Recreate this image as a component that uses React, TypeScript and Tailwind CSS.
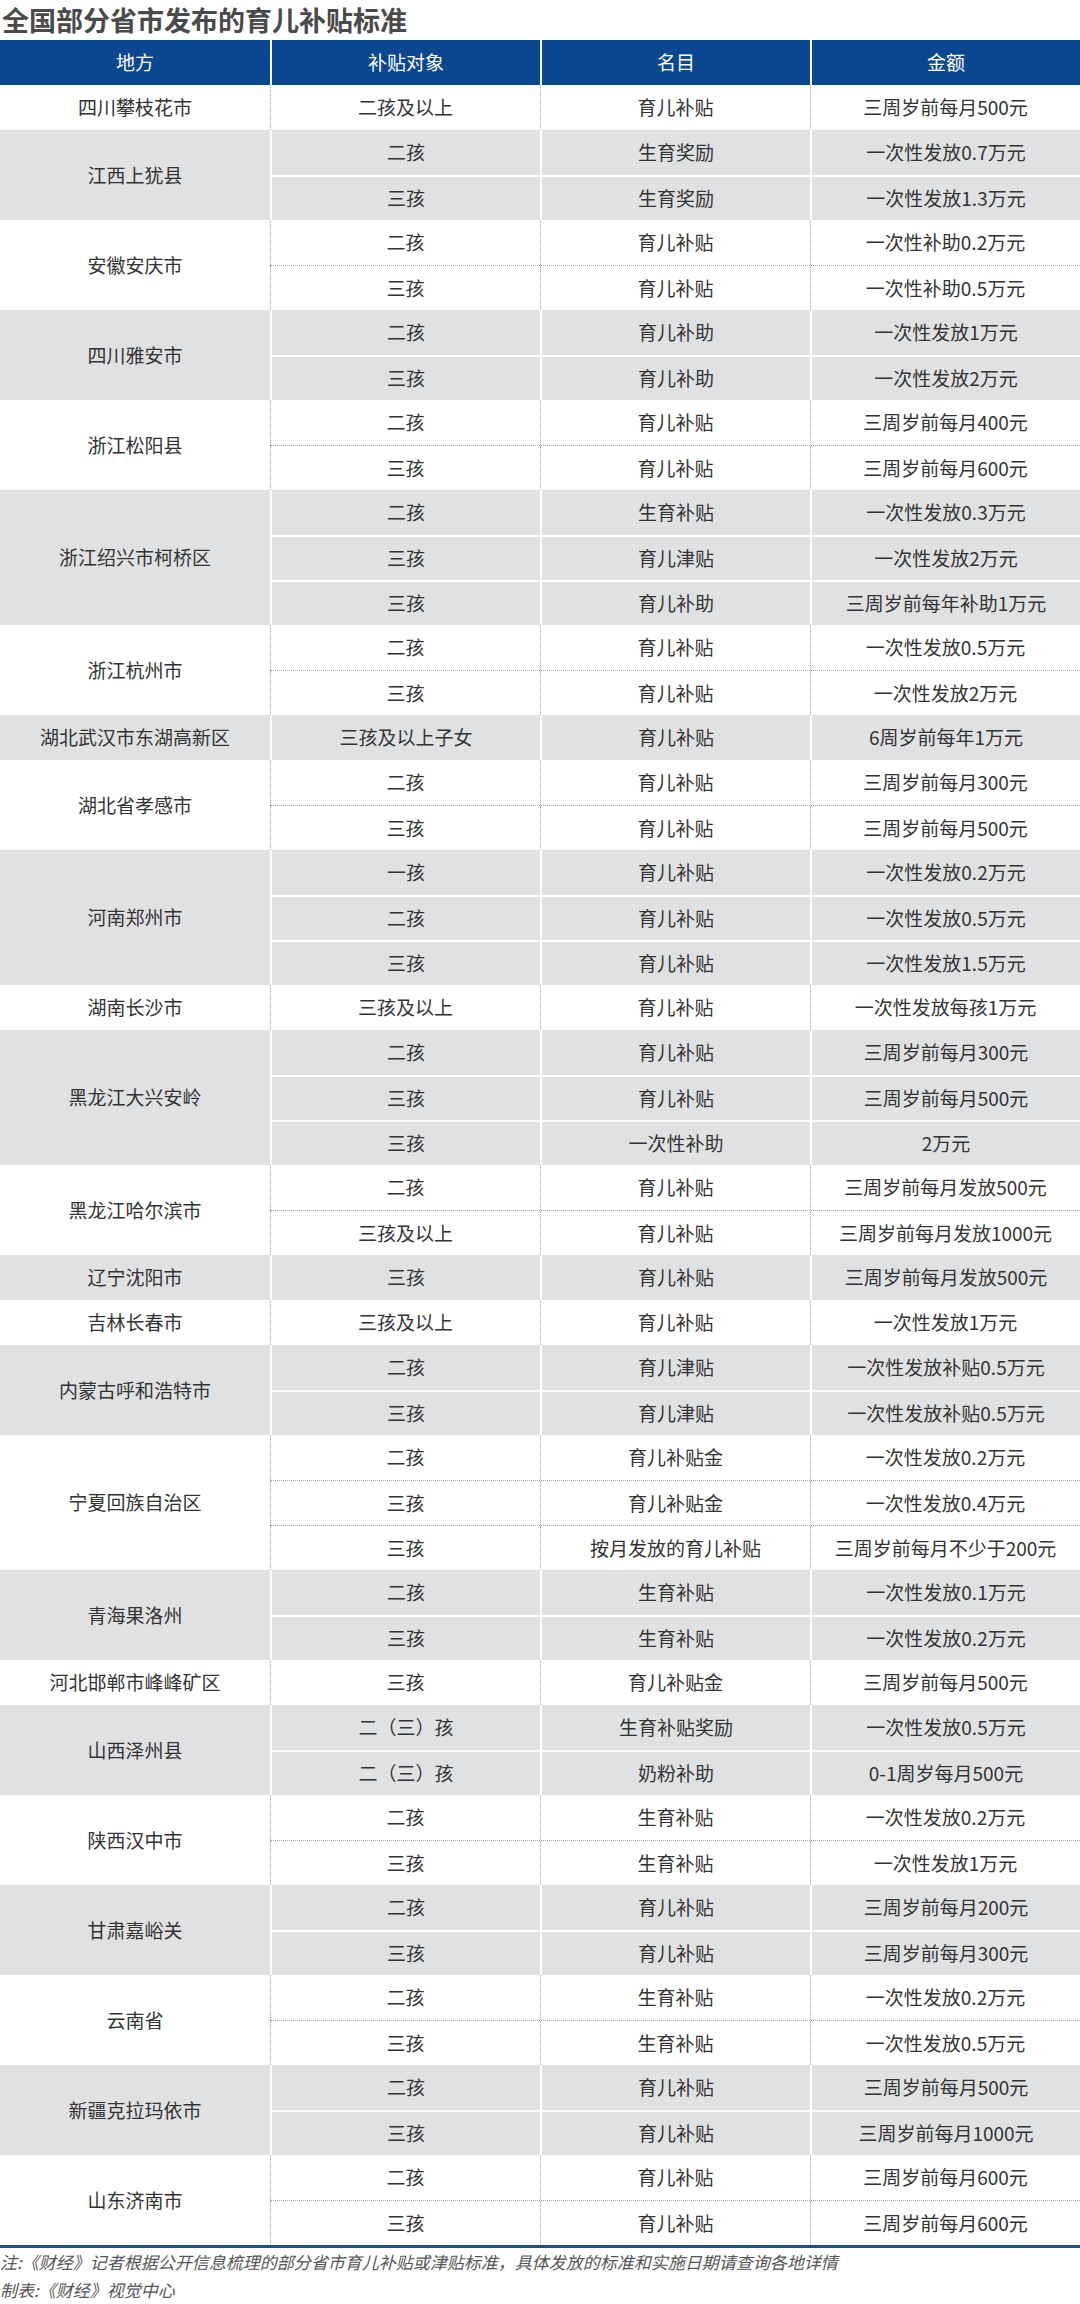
import React from "react";

type Row = [string, string, string];
type Group = { place: string; rows: Row[] };

const groups: Group[] = [
  { place: "四川攀枝花市", rows: [["二孩及以上", "育儿补贴", "三周岁前每月500元"]] },
  {
    place: "江西上犹县",
    rows: [
      ["二孩", "生育奖励", "一次性发放0.7万元"],
      ["三孩", "生育奖励", "一次性发放1.3万元"],
    ],
  },
  {
    place: "安徽安庆市",
    rows: [
      ["二孩", "育儿补贴", "一次性补助0.2万元"],
      ["三孩", "育儿补贴", "一次性补助0.5万元"],
    ],
  },
  {
    place: "四川雅安市",
    rows: [
      ["二孩", "育儿补助", "一次性发放1万元"],
      ["三孩", "育儿补助", "一次性发放2万元"],
    ],
  },
  {
    place: "浙江松阳县",
    rows: [
      ["二孩", "育儿补贴", "三周岁前每月400元"],
      ["三孩", "育儿补贴", "三周岁前每月600元"],
    ],
  },
  {
    place: "浙江绍兴市柯桥区",
    rows: [
      ["二孩", "生育补贴", "一次性发放0.3万元"],
      ["三孩", "育儿津贴", "一次性发放2万元"],
      ["三孩", "育儿补助", "三周岁前每年补助1万元"],
    ],
  },
  {
    place: "浙江杭州市",
    rows: [
      ["二孩", "育儿补贴", "一次性发放0.5万元"],
      ["三孩", "育儿补贴", "一次性发放2万元"],
    ],
  },
  { place: "湖北武汉市东湖高新区", rows: [["三孩及以上子女", "育儿补贴", "6周岁前每年1万元"]] },
  {
    place: "湖北省孝感市",
    rows: [
      ["二孩", "育儿补贴", "三周岁前每月300元"],
      ["三孩", "育儿补贴", "三周岁前每月500元"],
    ],
  },
  {
    place: "河南郑州市",
    rows: [
      ["一孩", "育儿补贴", "一次性发放0.2万元"],
      ["二孩", "育儿补贴", "一次性发放0.5万元"],
      ["三孩", "育儿补贴", "一次性发放1.5万元"],
    ],
  },
  { place: "湖南长沙市", rows: [["三孩及以上", "育儿补贴", "一次性发放每孩1万元"]] },
  {
    place: "黑龙江大兴安岭",
    rows: [
      ["二孩", "育儿补贴", "三周岁前每月300元"],
      ["三孩", "育儿补贴", "三周岁前每月500元"],
      ["三孩", "一次性补助", "2万元"],
    ],
  },
  {
    place: "黑龙江哈尔滨市",
    rows: [
      ["二孩", "育儿补贴", "三周岁前每月发放500元"],
      ["三孩及以上", "育儿补贴", "三周岁前每月发放1000元"],
    ],
  },
  { place: "辽宁沈阳市", rows: [["三孩", "育儿补贴", "三周岁前每月发放500元"]] },
  { place: "吉林长春市", rows: [["三孩及以上", "育儿补贴", "一次性发放1万元"]] },
  {
    place: "内蒙古呼和浩特市",
    rows: [
      ["二孩", "育儿津贴", "一次性发放补贴0.5万元"],
      ["三孩", "育儿津贴", "一次性发放补贴0.5万元"],
    ],
  },
  {
    place: "宁夏回族自治区",
    rows: [
      ["二孩", "育儿补贴金", "一次性发放0.2万元"],
      ["三孩", "育儿补贴金", "一次性发放0.4万元"],
      ["三孩", "按月发放的育儿补贴", "三周岁前每月不少于200元"],
    ],
  },
  {
    place: "青海果洛州",
    rows: [
      ["二孩", "生育补贴", "一次性发放0.1万元"],
      ["三孩", "生育补贴", "一次性发放0.2万元"],
    ],
  },
  { place: "河北邯郸市峰峰矿区", rows: [["三孩", "育儿补贴金", "三周岁前每月500元"]] },
  {
    place: "山西泽州县",
    rows: [
      ["二（三）孩", "生育补贴奖励", "一次性发放0.5万元"],
      ["二（三）孩", "奶粉补助", "0-1周岁每月500元"],
    ],
  },
  {
    place: "陕西汉中市",
    rows: [
      ["二孩", "生育补贴", "一次性发放0.2万元"],
      ["三孩", "生育补贴", "一次性发放1万元"],
    ],
  },
  {
    place: "甘肃嘉峪关",
    rows: [
      ["二孩", "育儿补贴", "三周岁前每月200元"],
      ["三孩", "育儿补贴", "三周岁前每月300元"],
    ],
  },
  {
    place: "云南省",
    rows: [
      ["二孩", "生育补贴", "一次性发放0.2万元"],
      ["三孩", "生育补贴", "一次性发放0.5万元"],
    ],
  },
  {
    place: "新疆克拉玛依市",
    rows: [
      ["二孩", "育儿补贴", "三周岁前每月500元"],
      ["三孩", "育儿补贴", "三周岁前每月1000元"],
    ],
  },
  {
    place: "山东济南市",
    rows: [
      ["二孩", "育儿补贴", "三周岁前每月600元"],
      ["三孩", "育儿补贴", "三周岁前每月600元"],
    ],
  },
];

const headers = ["地方", "补贴对象", "名目", "金额"];

function GroupBlock({ group, gray }: { group: Group; gray: boolean }) {
  const vLine = gray ? "border-l-2 border-white" : "border-l border-dotted border-[#a3a3a3]";
  const hLine = gray ? "border-t-2 border-white" : "border-t border-dotted border-[#a3a3a3]";
  return (
    <div className={`flex ${gray ? "bg-[#e0e1e3]" : "bg-white"}`}>
      <div className="flex w-[270px] shrink-0 items-center justify-center">{group.place}</div>
      <div className="flex flex-1 flex-col">
        {group.rows.map((r, j) => (
          <div key={j} className={`flex h-[45px] ${j > 0 ? hLine : ""}`}>
            {r.map((c, k) => (
              <div key={k} className={`flex w-[270px] shrink-0 items-center justify-center ${vLine}`}>
                {c}
              </div>
            ))}
          </div>
        ))}
      </div>
    </div>
  );
}

export default function App() {
  return (
    <div className="w-[1080px] bg-white font-['Noto_Sans_CJK_SC','Noto_Sans',sans-serif]">
      <h1 className="h-[40px] pl-[2px] text-[27px] font-bold leading-[40px] text-[#4a4a4a]">
        全国部分省市发布的育儿补贴标准
      </h1>
      <div className="flex h-[45px]">
        {headers.map((h, i) => (
          <div
            key={h}
            className={`flex w-[270px] items-center justify-center bg-[#0b4690] text-[19px] text-white ${
              i > 0 ? "border-l-2 border-white" : ""
            }`}
          >
            {h}
          </div>
        ))}
      </div>
      <div className="text-[19px] text-[#333333]">
        {groups.map((g, i) => (
          <GroupBlock key={g.place} group={g} gray={i % 2 === 1} />
        ))}
      </div>
      <div className="h-[3px] bg-[#1d4e84]" />
      <div className="text-[17px] italic leading-[28px] text-[#555555]">
        <div>注:《财经》记者根据公开信息梳理的部分省市育儿补贴或津贴标准，具体发放的标准和实施日期请查询各地详情</div>
        <div>制表:《财经》视觉中心</div>
      </div>
    </div>
  );
}
